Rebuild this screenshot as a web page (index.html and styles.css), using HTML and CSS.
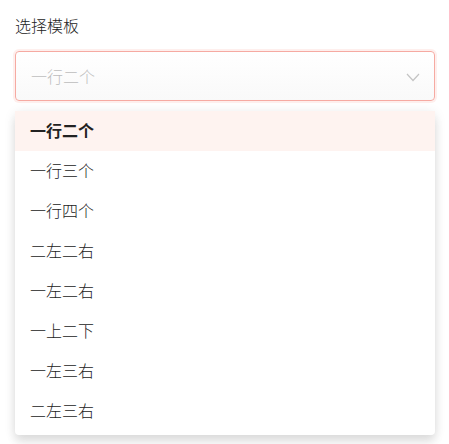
FILE: index.html
```html
<!DOCTYPE html>
<html lang="zh">
<head>
  <meta charset="UTF-8">
  <title>选择模板</title>
  <link rel="stylesheet" href="styles.css">
</head>
<body>

  <div class="field">
    <label class="field-label">选择模板</label>

    <!-- Select box -->
    <div class="select-box">
      <span class="select-placeholder">一行二个</span>
      <svg class="select-arrow" width="14" height="9" viewBox="0 0 14 9">
        <polyline points="1,1 7,7.5 13,1" fill="none" stroke="#c4c4c4" stroke-width="1.2"/>
      </svg>
    </div>

    <!-- Dropdown options -->
    <ul class="select-menu">
      <li class="option active">一行二个</li>
      <li class="option">一行三个</li>
      <li class="option">一行四个</li>
      <li class="option">二左二右</li>
      <li class="option">一左二右</li>
      <li class="option">一上二下</li>
      <li class="option">一左三右</li>
      <li class="option">二左三右</li>
    </ul>
  </div>

</body>
</html>
```

FILE: styles.css
```css
body {
  font-family: "Noto Sans CJK SC", "Noto Sans", sans-serif;
  font-weight: 300;
  margin: 0;
  padding: 14px 14px 0 15px;
  min-height: 444px;
  box-sizing: border-box;
  background: #fff;
  color: #222;
}

.field-label {
  display: block;
  font-size: 16px;
  line-height: 22px;
  color: #222;
  margin-bottom: 15px;
}

.select-box {
  display: flex;
  align-items: center;
  justify-content: space-between;
  height: 48px;
  padding: 0 14px 0 15px;
  border: 1px solid #f6aaa2;
  border-radius: 4px;
  background: linear-gradient(#fff, #f9f9f9);
  box-shadow: 0 0 0 2px rgba(245, 120, 108, 0.12);
}

.select-placeholder {
  font-size: 16px;
  color: #bdbdbd;
}

.select-arrow {
  margin-top: 2px;
}

.select-menu {
  list-style: none;
  margin: 10px 0 0 0;
  padding: 0 0 4px 0;
  background: #fff;
  border-radius: 4px;
  box-shadow: 0 2px 12px rgba(0, 0, 0, 0.1), 0 8px 10px rgba(0, 0, 0, 0.08);
  width: 420px;
}

.option {
  height: 39px;
  line-height: 39px;
  padding: 0 15px 1px 15px;
  font-size: 16px;
  color: #222;
}

.option.active {
  background: #fef3f0;
  font-weight: bold;
}
```
